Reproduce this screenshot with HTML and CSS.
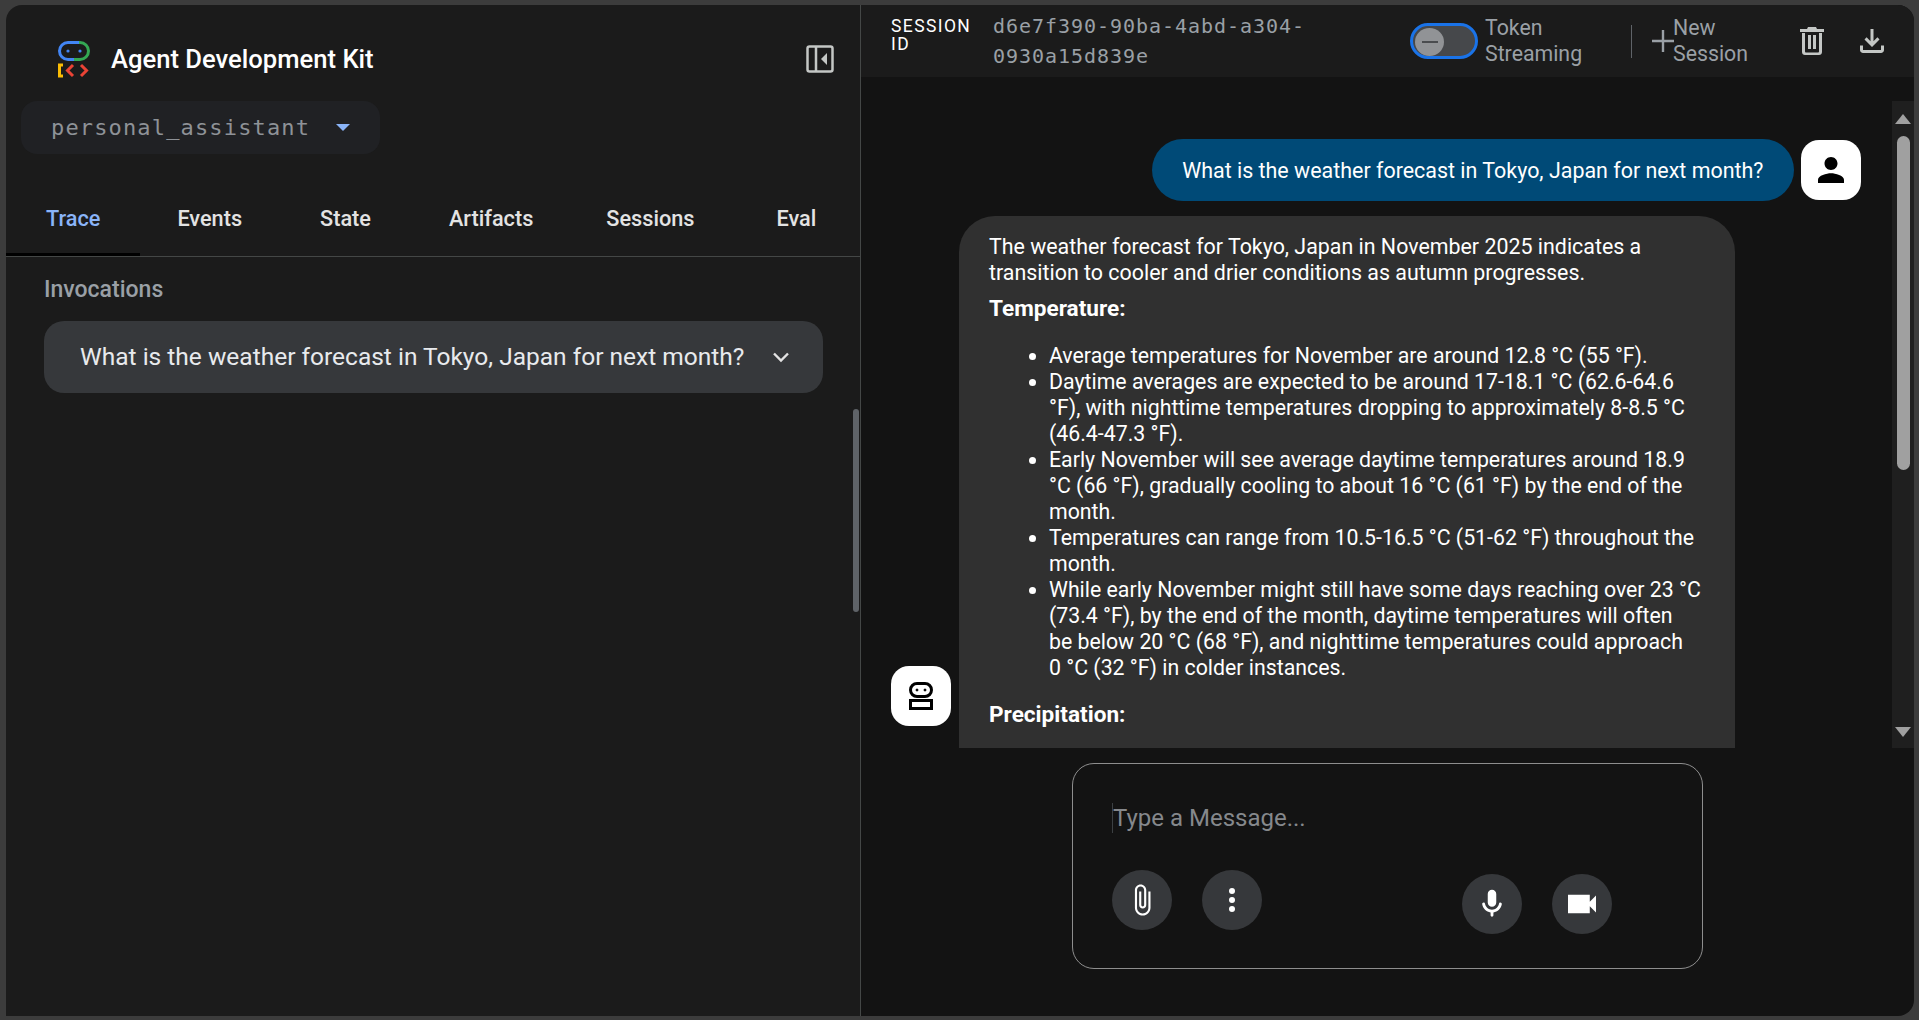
FILE: index.html
```html
<!DOCTYPE html>
<html lang="en">
<head>
<meta charset="utf-8">
<title>Agent Development Kit</title>
<link rel="stylesheet" href="styles.css">
</head>
<body>
<div class="app">
  <aside class="side">
    <div class="brand">
      <svg class="logo" viewBox="0 0 34 38" fill="none">
        <path d="M17 2.5H11a8.5 8.5 0 0 0 0 17h6" stroke="#4285f4" stroke-width="3"/>
        <path d="M17 2.5h6a8.500 8.500 0 0 1 0 17h-6" stroke="#34a853" stroke-width="3"/>
        <path d="M17 2.500h5M17 19.500h-1" stroke="#4285f4" stroke-width="3"/>
        <circle cx="11" cy="11" r="1.600" fill="#4285f4"/>
        <circle cx="23" cy="11" r="1.600" fill="#4285f4"/>
        <path d="M6 25H2.500v11H6" stroke="#fbbc04" stroke-width="3"/>
        <path d="M16 25l-5.500 5.500L16 36M24 25l5.500 5.500L24 36" stroke="#ea4335" stroke-width="3"/>
      </svg>
      <span class="brand-name">Agent Development Kit</span>
      <svg class="dock" viewBox="0 0 28 28" fill="none">
        <rect x="1.500" y="1.500" width="25" height="25" rx="2" stroke="#c4c7c5" stroke-width="2.500"/>
        <path d="M10 2v24" stroke="#c4c7c5" stroke-width="2.500"/>
        <path d="M21 8v12l-6-6z" fill="#c4c7c5"/>
      </svg>
    </div>
    <div class="picker">
      <span class="picker-value">personal_assistant</span>
      <span class="picker-arrow"></span>
    </div>
    <nav class="tabs">
      <span class="tab tab-active">Trace</span>
      <span class="tab">Events</span>
      <span class="tab">State</span>
      <span class="tab">Artifacts</span>
      <span class="tab tab-sessions">Sessions</span>
      <span class="tab">Eval</span>
    </nav>
    <section class="trace">
      <h2 class="trace-title">Invocations</h2>
      <div class="invocation">
        <span class="invocation-text">What is the weather forecast in Tokyo, Japan for next month?</span>
        <svg class="chevron" viewBox="0 0 18 12" fill="none"><path d="M2 2.500l7 7 7-7" stroke="#e3e3e3" stroke-width="2.400"/></svg>
      </div>
    </section>
    <div class="side-thumb"></div>
  </aside>

  <main class="main">
    <header class="top">
      <div class="session-label">SESSION ID</div>
      <div class="session-id">d6e7f390-90ba-4abd-a304-0930a15d839e</div>
      <div class="switch"><span class="switch-knob"><span class="switch-dash"></span></span></div>
      <div class="top-label label-token">Token Streaming</div>
      <div class="top-rule"></div>
      <svg class="plus" viewBox="0 0 22 22" fill="none"><path d="M11 0v22M0 11h22" stroke="#9aa0a6" stroke-width="2.400"/></svg>
      <div class="top-label label-new">New Session</div>
      <svg class="trash" viewBox="0 0 24 28" fill="#c4c7c5"><path d="M8 0h8l1 2h7v3H0V2h7zM2 6h3v18.500c0 .5.500 1 1 1h12c.5 0 1-.5 1-1V6h3v19c0 1.700-1.300 3-3 3H5c-1.700 0-3-1.300-3-3z"/><path d="M8 8h3v14H8zM13 8h3v14h-3z"/></svg>
      <svg class="download" viewBox="4 4 16 16" fill="#c4c7c5"><path d="M12 16 7 11l1.400-1.450L11 12.150V4h2v8.150l2.600-2.600L17 11l-5 5ZM6 20q-.825 0-1.412-.587Q4 18.825 4 18v-3h2v3h12v-3h2v3q0 .825-.587 1.413Q18.825 20 18 20H6Z"/></svg>
    </header>

    <div class="chat">
      <div class="messages">
        <div class="row-user">
          <div class="bubble-user">What is the weather forecast in Tokyo, Japan for next month?</div>
          <div class="avatar">
            <svg class="avatar-user" viewBox="4 4 16 16"><path d="M12 12c2.210 0 4-1.790 4-4s-1.790-4-4-4-4 1.790-4 4 1.790 4 4 4zm0 2c-2.670 0-8 1.340-8 4v2h16v-2c0-2.660-5.330-4-8-4z"/></svg>
          </div>
        </div>
        <div class="row-bot">
          <div class="avatar avatar-left">
            <svg class="avatar-bot" viewBox="0 0 24 28" fill="none" stroke="#000" stroke-width="3">
              <rect x="1.500" y="1.500" width="21" height="13" rx="6.500"/>
              <rect x="1.500" y="18.500" width="21" height="8"/>
              <circle cx="8" cy="8" r="1" fill="#000" stroke-width="1"/>
              <circle cx="16" cy="8" r="1" fill="#000" stroke-width="1"/>
            </svg>
          </div>
          <div class="bubble-bot">
            <p>The weather forecast for Tokyo, Japan in November 2025 indicates a transition to cooler and drier conditions as autumn progresses.</p>
            <p class="heading">Temperature:</p>
            <ul>
              <li>Average temperatures for November are around 12.8 °C (55 °F).</li>
              <li>Daytime averages are expected to be around 17-18.1 °C (62.6-64.6 °F), with nighttime temperatures dropping to approximately 8-8.5 °C (46.4-47.3 °F).</li>
              <li>Early November will see average daytime temperatures around 18.9 °C (66 °F), gradually cooling to about 16 °C (61 °F) by the end of the month.</li>
              <li>Temperatures can range from 10.5-16.5 °C (51-62 °F) throughout the month.</li>
              <li>While early November might still have some days reaching over 23 °C (73.4 °F), by the end of the month, daytime temperatures will often be&nbsp;below 20 °C (68 °F), and nighttime temperatures could approach 0&nbsp;°C (32 °F) in colder instances.</li>
            </ul>
            <p class="heading">Precipitation:</p>
          </div>
        </div>
      </div>
      <div class="scroll">
        <span class="scroll-up"></span>
        <span class="scroll-thumb"></span>
        <span class="scroll-down"></span>
      </div>
    </div>

    <div class="composer">
      <div class="placeholder">Type a Message...</div>
      <div class="actions">
        <div class="group">
          <span class="round">
            <svg class="icon-attach" viewBox="0 0 24 24" fill="#fff"><path d="M16.500 6v11.500c0 2.210-1.790 4-4 4s-4-1.790-4-4V5c0-1.380 1.120-2.500 2.500-2.500s2.500 1.120 2.500 2.500v10.500c0 .55-.45 1-1 1s-1-.45-1-1V6H10v9.500c0 1.380 1.120 2.500 2.500 2.500s2.500-1.120 2.500-2.500V5c0-2.210-1.790-4-4-4S7 2.790 7 5v12.500c0 3.040 2.460 5.500 5.500 5.500s5.500-2.460 5.500-5.500V6h-1.500z"/></svg>
          </span>
          <span class="round">
            <svg class="icon-more" viewBox="0 0 24 24" fill="#fff"><circle cx="12" cy="3" r="3"/><circle cx="12" cy="12" r="3"/><circle cx="12" cy="21" r="3"/></svg>
          </span>
        </div>
        <div class="group group-media">
          <span class="round">
            <svg class="icon-mic" viewBox="0 0 24 24" fill="#fff"><path d="M12 14c1.660 0 3-1.340 3-3V5c0-1.660-1.340-3-3-3S9 3.340 9 5v6c0 1.660 1.340 3 3 3zm5.910-3c-.49 0-.9.36-.98.85C16.520 14.200 14.470 16 12 16s-4.520-1.800-4.930-4.150c-.08-.49-.49-.85-.98-.85-.61 0-1.090.54-1 1.140.49 3 2.890 5.350 5.910 5.780V20c0 .55.45 1 1 1s1-.45 1-1v-2.080c3.020-.43 5.420-2.780 5.910-5.780.1-.6-.39-1.140-1-1.140z"/></svg>
          </span>
          <span class="round">
            <svg class="icon-video" viewBox="3 6 18 12" fill="#fff"><path d="M17 10.500V6H3v12h14v-4.500l4 4v-11l-4 4z"/></svg>
          </span>
        </div>
      </div>
    </div>
  </main>
</div>
</body>
</html>
```

FILE: styles.css
```css
* { box-sizing: border-box; }
html, body { height: 100%; }
body { margin: 0; background: #3c3c3c; font-family: Roboto, "Noto Sans", sans-serif; color: #e8eaed; overflow: hidden; }
.app { display: flex; height: 1020px; padding: 5px 5px 4px 6px; }

.side { position: relative; width: 855px; flex: none; background: #1b1b1b; border-right: 1px solid #444746; border-top-left-radius: 16px; display: flex; flex-direction: column; overflow: hidden; }
.brand { display: flex; align-items: center; height: 96px; padding: 11px 26px 0 51px; }
.logo { width: 34px; height: 38px; }
.brand-name { margin-left: 20px; font-size: 25.600px; font-weight: 500; color: #fff; flex: 1; }
.dock { width: 28px; height: 28px; }
.picker { display: flex; align-items: center; width: 359px; height: 53px; margin-left: 15px; padding-left: 30px; background: #202124; border-radius: 16px; }
.picker-value { font-family: "DejaVu Sans Mono", monospace; font-size: 22px; letter-spacing: 1.150px; color: #8e9297; }
.picker-arrow { width: 0; height: 0; margin-left: 26px; border-left: 7.500px solid transparent; border-right: 7.500px solid transparent; border-top: 7.500px solid #8ab4f8; }
.tabs { display: flex; height: 103px; align-items: center; padding-top: 26px; border-bottom: 1px solid #444746; }
.tab { position: relative; padding: 0 39px; font-size: 21.700px; font-weight: 500; color: #e3e3e3; line-height: 78px; height: 76px; }
.tab-active { color: #8ab4f8; padding: 0 40px; margin-right: -2px; }
.tab-active::after { content: ""; position: absolute; left: 0; right: 0; bottom: 0; height: 3px; background: #000; }
.tab-sessions { margin-left: -5px; margin-right: 4px; }
.trace { padding: 20px 0 0 38px; }
.trace-title { margin: 0; font-size: 23px; font-weight: 500; color: #9aa0a6; line-height: 26px; }
.invocation { display: flex; align-items: center; justify-content: space-between; width: 779px; height: 72px; margin-top: 18px; padding: 0 33px 0 36px; background: #36383b; border-radius: 20px; font-size: 24.500px; color: #e8eaed; }
.invocation-text { margin-top: -2px; }
.chevron { width: 18px; height: 12px; }
.side-thumb { position: absolute; left: 847px; top: 404px; width: 6px; height: 203px; background: #5f6368; border-radius: 3px; }

.main { flex: 1; min-width: 0; display: flex; flex-direction: column; background: #131313; border-top-right-radius: 16px; border-bottom-right-radius: 16px; overflow: hidden; }
.top { display: flex; align-items: center; height: 72px; background: #1b1b1b; flex: none; padding-left: 30px; }
.session-label { width: 84px; font-size: 17.500px; line-height: 18px; letter-spacing: 1.400px; color: #fff; margin-top: -12px; margin-right: 18px; }
.session-id { width: 320px; font-family: "DejaVu Sans Mono", monospace; font-size: 20px; letter-spacing: .96px; line-height: 30px; color: #9aa0a6; margin-top: -1px; }
.switch { width: 68px; height: 36px; margin-left: 97px; border: 3px solid #1a73e8; border-radius: 18px; background: #46484b; padding: 2px; }
.switch-knob { display: flex; align-items: center; justify-content: center; width: 29px; height: 28px; background: #919396; border-radius: 50%; }
.switch-dash { width: 16px; height: 2px; background: #4a4c4f; }
.top-label { font-size: 21.300px; line-height: 26px; color: #9aa0a6; }
.label-token { width: 110px; margin-left: 7px; }
.top-rule { width: 1px; height: 33px; background: #5f6368; margin-left: 36px; }
.plus { width: 22px; height: 22px; margin-left: 20px; }
.label-new { width: 100px; margin-left: -1px; margin-right: 1px; }
.trash { width: 24px; height: 28px; margin-left: 26px; }
.download { width: 24px; height: 24px; margin-left: 36px; }

.chat { display: flex; height: 647px; margin-top: 24px; flex: none; }
.messages { flex: 1; min-width: 0; display: flex; flex-direction: column; padding: 38px 0 0 30px; overflow: hidden; }
.row-user { display: flex; justify-content: flex-end; align-items: center; gap: 7px; padding-right: 31px; flex: none; }
.bubble-user { height: 62px; padding: 0 30.500px; display: flex; align-items: center; background: #004a77; border-radius: 31px; font-size: 21.450px; color: #fff; }
.avatar { width: 60px; height: 60px; border-radius: 18px; background: #fff; display: flex; align-items: center; justify-content: center; flex: none; }
.avatar-user { width: 26px; height: 26px; fill: #000; }
.avatar-bot { width: 24px; height: 28px; }
.row-bot { flex: 1; min-height: 0; display: flex; align-items: flex-start; gap: 8px; margin-top: 15px; }
.avatar-left { align-self: flex-end; margin-bottom: 22px; }
.bubble-bot { width: 776px; flex: none; padding: 18px 30px 30px; background: #303030; border-radius: 36px 36px 0 0; font-size: 21.300px; line-height: 26px; color: #fff; }
.bubble-bot p { margin: 0; font-size: 21.400px; }
.bubble-bot .heading { font-weight: 700; font-size: 22.600px; margin-top: 10px; }
.bubble-bot ul { margin: 21px 0 21px; padding-left: 60px; }

.scroll { width: 22px; flex: none; background: #1f1f1f; display: flex; flex-direction: column; align-items: center; }
.scroll-up { width: 0; height: 0; margin-top: 13px; border-left: 8px solid transparent; border-right: 8px solid transparent; border-bottom: 10px solid #a0a0a0; }
.scroll-thumb { width: 13px; height: 334px; margin-top: 12px; background: #a0a0a0; border-radius: 7px; }
.scroll-down { width: 0; height: 0; margin-top: auto; margin-bottom: 11px; border-left: 8px solid transparent; border-right: 8px solid transparent; border-top: 10px solid #a0a0a0; }

.composer { width: 631px; height: 206px; margin: 15px 0 0 211px; border: 1px solid #8e8e8e; border-radius: 22px; padding: 39px 90px 0 39px; }
.placeholder { font-size: 24px; line-height: 30px; color: #85888c; border-left: 1px solid #3c4043; }
.actions { display: flex; justify-content: space-between; margin-top: 37px; }
.group { display: flex; gap: 30px; }
.group-media { margin-top: 4px; }
.round { width: 60px; height: 60px; border-radius: 50%; background: #36383b; display: flex; align-items: center; justify-content: center; }
.icon-attach { width: 34px; height: 34px; }
.icon-more { width: 24px; height: 24px; }
.icon-mic { width: 34px; height: 34px; }
.icon-video { width: 28px; height: 22px; }
```
